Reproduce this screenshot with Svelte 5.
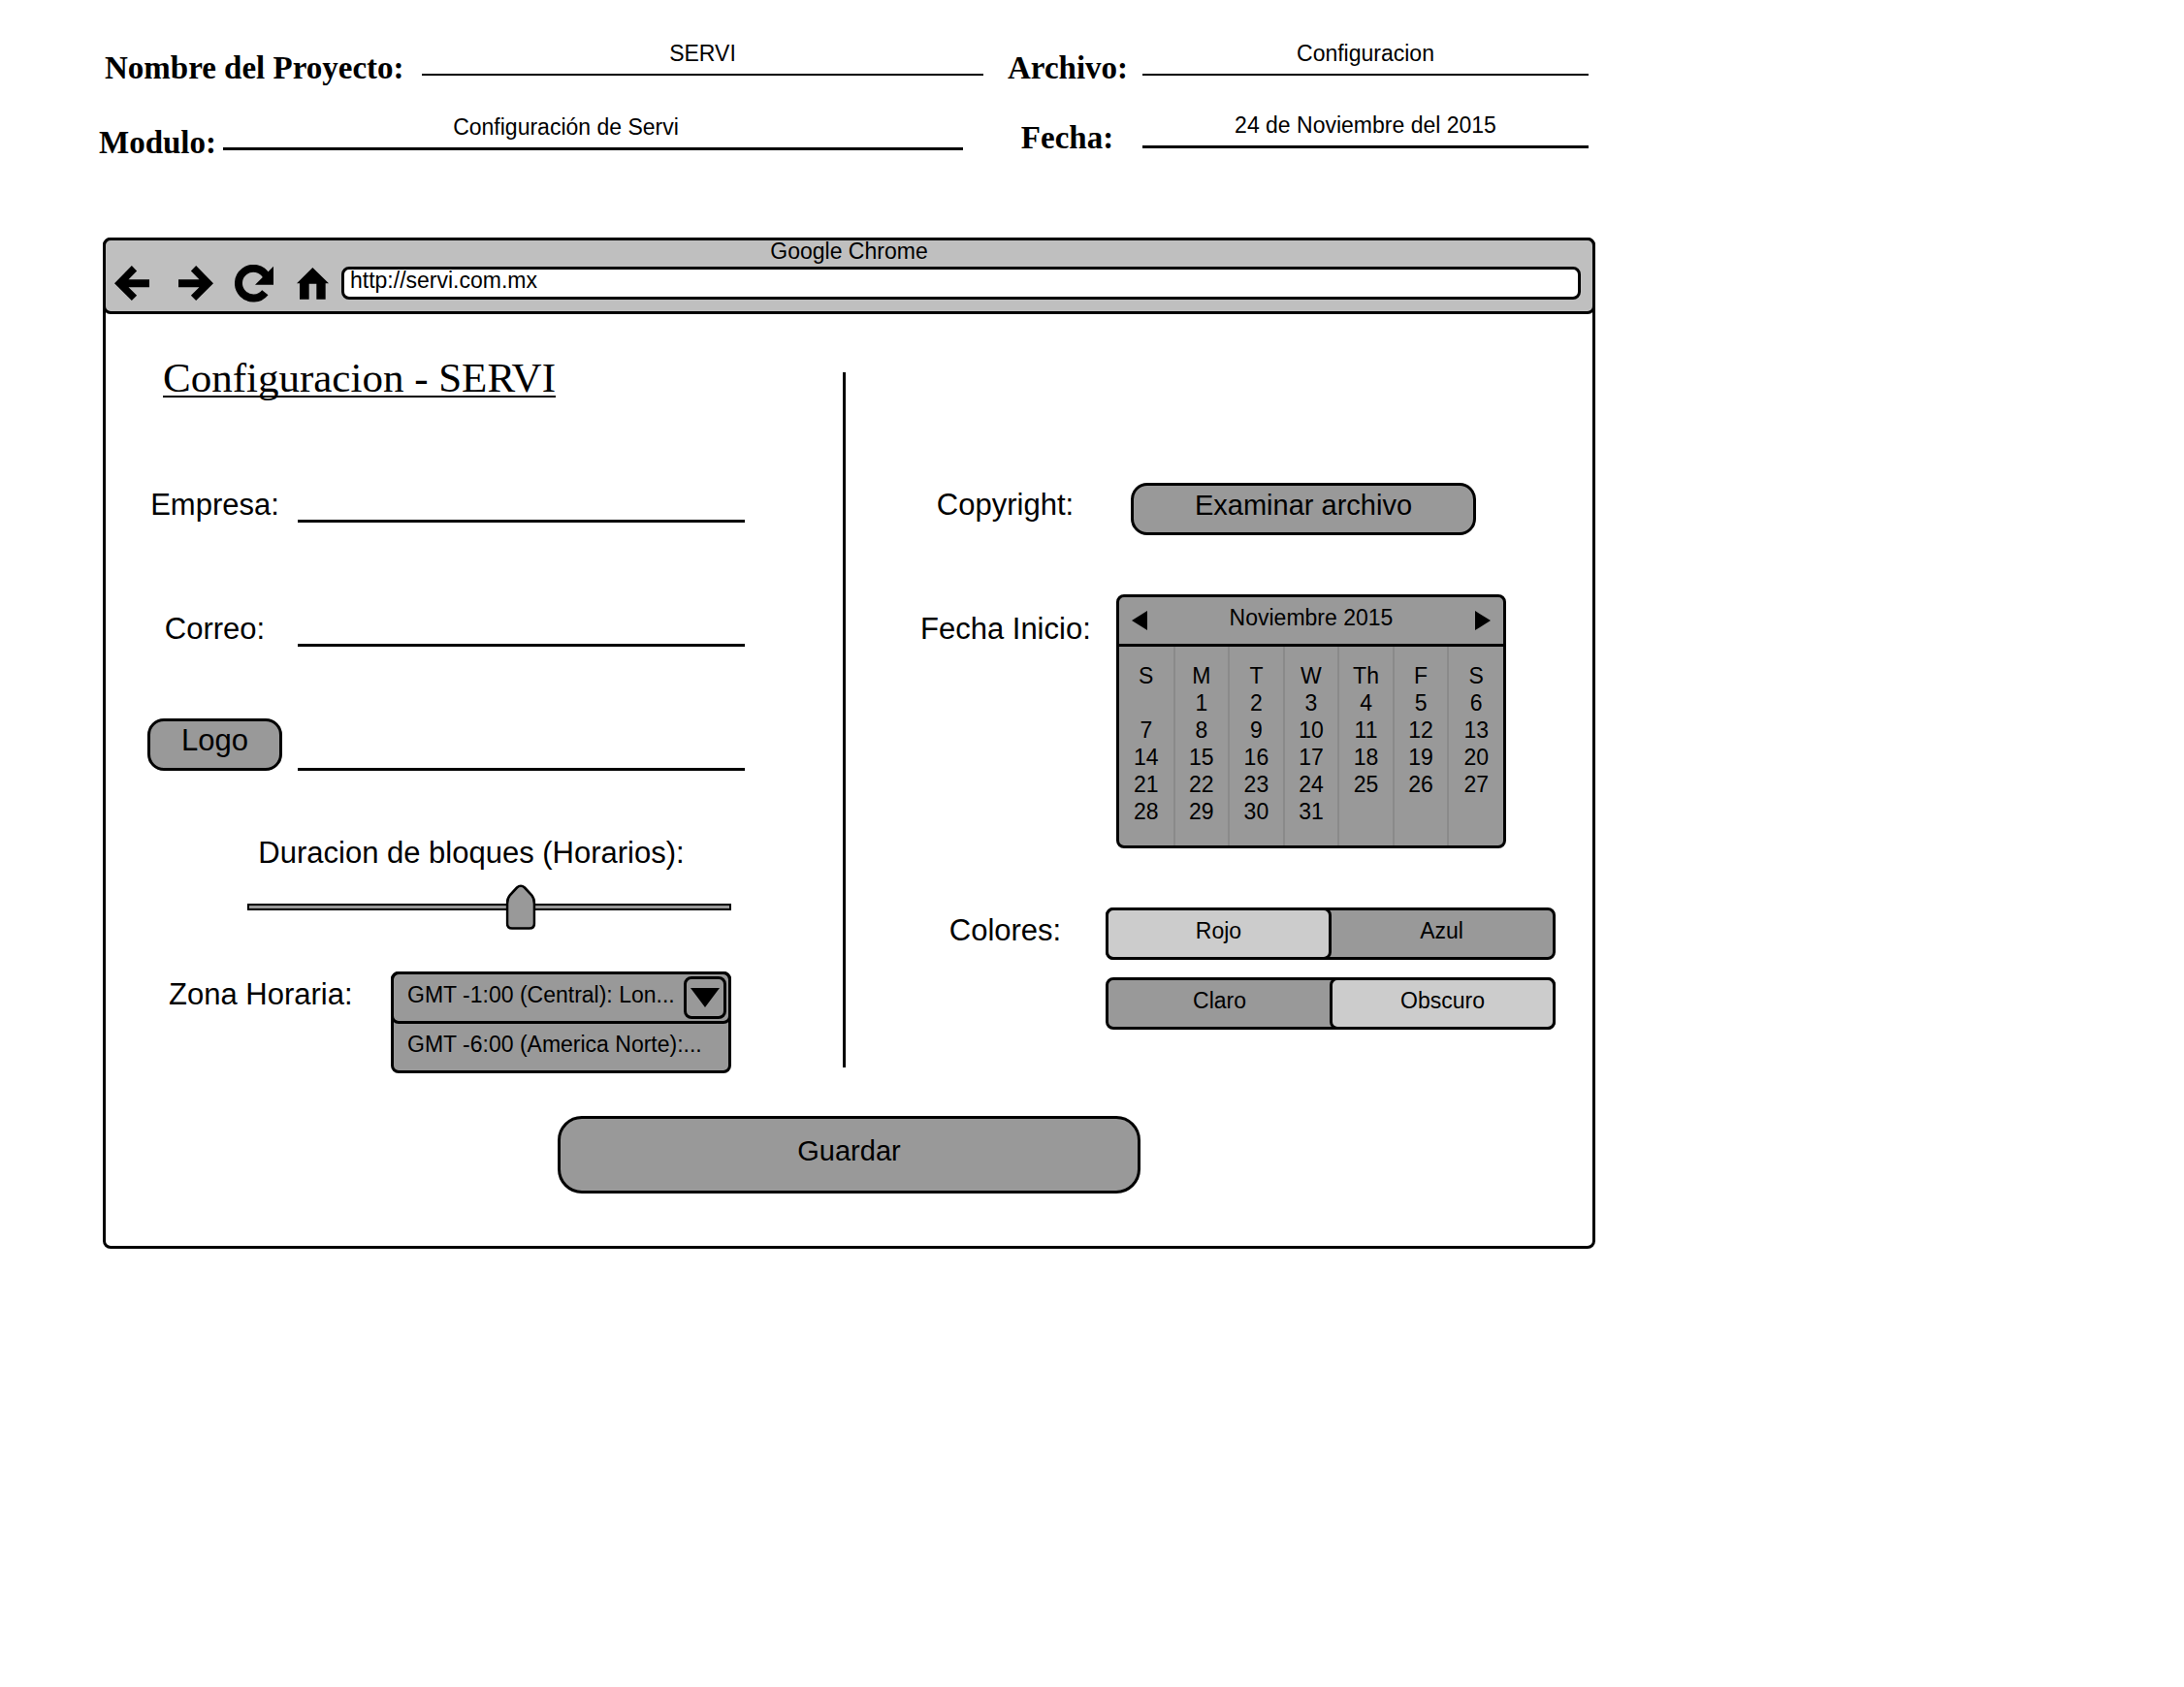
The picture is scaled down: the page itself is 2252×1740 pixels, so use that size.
<script>
  let project = $state('SERVI');
  let moduleName = $state('Configuración de Servi');
  let file = $state('Configuracion');
  let date = $state('24 de Noviembre del 2015');
  let url = $state('http://servi.com.mx');
  let company = $state('');
  let email = $state('');
  let logo = $state('');
  let duration = $state(565);
  let color = $state('Rojo');
  let tone = $state('Obscuro');

  const days = ['S', 'M', 'T', 'W', 'Th', 'F', 'S'];
  const weeks = [
    ['', 1, 2, 3, 4, 5, 6],
    [7, 8, 9, 10, 11, 12, 13],
    [14, 15, 16, 17, 18, 19, 20],
    [21, 22, 23, 24, 25, 26, 27],
    [28, 29, 30, 31, '', '', '']
  ];
</script>

<div class="page">
  <header class="sheet-head">
    <div class="head-col">
      <div class="head-row indent">
        <label class="head-label project" for="project">Nombre del Proyecto:</label>
        <input id="project" class="head-input" bind:value={project} />
      </div>
      <div class="head-row short">
        <label class="head-label module" for="module">Modulo:</label>
        <input id="module" class="head-input thick offset" bind:value={moduleName} />
      </div>
    </div>
    <div class="head-col side">
      <div class="head-row">
        <label class="head-label centered" for="file">Archivo:</label>
        <input id="file" class="head-input" bind:value={file} />
      </div>
      <div class="head-row">
        <label class="head-label centered" for="date">Fecha:</label>
        <input id="date" class="head-input thick low" bind:value={date} />
      </div>
    </div>
  </header>

  <main class="window">
    <div class="chrome">
      <div class="chrome-title">Google Chrome</div>
      <div class="toolbar">
        <nav class="nav">
          <button class="nav-btn back" aria-label="Atrás">
            <svg width="36" height="36" viewBox="0 0 109 109"><path d="M0 55 54 0 70 17 44 43H109V67H44L70 93 54 109Z" /></svg>
          </button>
          <button class="nav-btn" aria-label="Adelante">
            <svg width="36" height="36" viewBox="0 0 109 109"><path d="M109 55 55 0 39 17 65 43H0V67H65L39 93 55 109Z" /></svg>
          </button>
          <button class="nav-btn" aria-label="Recargar">
            <svg width="40" height="39" viewBox="0 0 120 117">
              <path d="M94 86A46 46 0 1 1 98 35" fill="none" stroke="#000" stroke-width="24" />
              <path d="M120 5V62H63Z" />
            </svg>
          </button>
          <button class="nav-btn" aria-label="Inicio">
            <svg width="33" height="33" viewBox="0 0 99 99"><path d="M49 0 99 49H89V98H61V50H38V98H9V49H0Z" /></svg>
          </button>
        </nav>
        <input class="url" aria-label="Dirección" bind:value={url} />
      </div>
    </div>

    <form class="content" onsubmit={(e) => e.preventDefault()}>
      <div class="columns">
        <section class="left">
          <h1>Configuracion - SERVI</h1>
          <div class="fields">
            <label class="label" for="company">Empresa:</label>
            <input id="company" class="line" bind:value={company} />
            <label class="label" for="email">Correo:</label>
            <input id="email" class="line" bind:value={email} />
            <button type="button" class="btn logo">Logo</button>
            <input class="line" aria-label="Logo" bind:value={logo} />
          </div>
          <div class="duration">
            <label class="label" for="duration">Duracion de bloques (Horarios):</label>
            <div class="slider">
              <input id="duration" type="range" min="0" max="1000" bind:value={duration} />
              <svg class="thumb" style:left="{duration / 10}%" width="31" height="47" viewBox="0 0 31 47">
                <path d="M1.5 20Q1.5 14.5 4.5 11L11.5 3.5Q15.5 0 19.5 3.5L26.5 11Q29.5 14.5 29.5 20V40.5Q29.5 45.5 24.5 45.5H6.5Q1.5 45.5 1.5 40.5Z" fill="#999" stroke="#000" stroke-width="2.6" />
              </svg>
            </div>
          </div>
          <div class="zone">
            <label class="label" for="zone">Zona Horaria:</label>
            <div class="combo">
              <div class="combo-head">
                <select id="zone">
                  <option>GMT -1:00 (Central): Lon...</option>
                  <option>GMT -6:00 (America Norte):...</option>
                </select>
                <span class="combo-arrow">
                  <svg width="30" height="20" viewBox="0 0 30 20"><path d="M0 0H30L15 20Z" /></svg>
                </span>
              </div>
              <button type="button" class="combo-option">GMT -6:00 (America Norte):...</button>
            </div>
          </div>
        </section>

        <div class="divider"></div>

        <section class="right">
          <label class="label copy-label" for="copyright">Copyright:</label>
          <button type="button" id="copyright" class="btn browse">Examinar archivo</button>

          <span class="label date-label" id="start-label">Fecha Inicio:</span>
          <div class="calendar" role="group" aria-labelledby="start-label">
            <div class="cal-head">
              <button type="button" class="cal-btn" aria-label="Mes anterior">
                <svg width="16" height="20" viewBox="0 0 16 20"><path d="M16 0V20L0 10Z" /></svg>
              </button>
              <span class="cal-title">Noviembre 2015</span>
              <button type="button" class="cal-btn" aria-label="Mes siguiente">
                <svg width="16" height="20" viewBox="0 0 16 20"><path d="M0 0V20L16 10Z" /></svg>
              </button>
            </div>
            <table>
              <thead>
                <tr>{#each days as day}<th scope="col">{day}</th>{/each}</tr>
              </thead>
              <tbody>
                {#each weeks as week}
                  <tr>{#each week as day}<td>{day}</td>{/each}</tr>
                {/each}
              </tbody>
            </table>
          </div>

          <span class="label color-label" id="color-label">Colores:</span>
          <div class="segments">
            <div class="segment" role="radiogroup" aria-labelledby="color-label">
              {#each ['Rojo', 'Azul'] as option}
                <label class="seg" class:on={color === option}>
                  <input type="radio" name="color" value={option} bind:group={color} />{option}
                </label>
              {/each}
            </div>
            <div class="segment" role="radiogroup" aria-label="Tono">
              {#each ['Claro', 'Obscuro'] as option}
                <label class="seg" class:on={tone === option}>
                  <input type="radio" name="tone" value={option} bind:group={tone} />{option}
                </label>
              {/each}
            </div>
          </div>
        </section>
      </div>
      <button class="btn save">Guardar</button>
    </form>
  </main>
</div>

<style>
  :global(body) {
    margin: 0;
    background: #fff;
  }
  .page,
  .page :global(*) {
    box-sizing: border-box;
  }
  .page {
    max-width: 1645px;
    padding: 38px 0 38px 102px;
    font-family: 'Liberation Sans', Arial, sans-serif;
    font-size: 23px;
    color: #000;
  }
  input,
  button,
  select {
    margin: 0;
    padding: 0;
    border: 0;
    border-radius: 0;
    background: none;
    font: inherit;
    color: inherit;
    outline: none;
  }
  svg {
    display: block;
  }

  .sheet-head {
    display: flex;
    gap: 25px;
    padding-right: 7px;
    margin-bottom: 80px;
  }
  .head-col {
    flex: 912;
    min-width: 0;
    display: flex;
    flex-direction: column;
    gap: 27px;
  }
  .head-col.side {
    flex: 599;
    gap: 25px;
  }
  .head-row {
    display: flex;
    align-items: flex-end;
  }
  .indent {
    padding-left: 6px;
  }
  .short {
    padding-right: 21px;
  }
  .head-label {
    flex: none;
    font: bold 33px/36px 'Liberation Serif', 'Times New Roman', serif;
  }
  .project {
    width: 327px;
  }
  .module {
    width: 128px;
  }
  .centered {
    width: 139px;
    padding-right: 16px;
    text-align: center;
  }
  .head-input {
    flex: 1;
    min-width: 0;
    height: 40px;
    margin-bottom: 10px;
    padding-bottom: 4px;
    border-bottom: 2px solid #000;
    text-align: center;
  }
  .thick {
    border-bottom-width: 3px;
  }
  .offset {
    padding-right: 56px;
  }
  .low {
    margin-bottom: 7px;
  }

  .window {
    margin-left: 4px;
    border: 3px solid #000;
    border-radius: 8px;
  }
  .chrome {
    margin: -3px -3px 0;
    border: 3px solid #000;
    border-radius: 8px;
    background: #bfbfbf;
  }
  .chrome-title {
    line-height: 22px;
    text-align: center;
  }
  .toolbar {
    display: flex;
    align-items: center;
    gap: 4px;
    padding: 2px 12px 9px 1px;
  }
  .nav {
    display: flex;
    gap: 8px;
  }
  .nav-btn {
    display: grid;
    place-items: center;
    width: 52px;
    height: 40px;
  }
  .back {
    margin-right: 6px;
  }
  .url {
    flex: 1;
    min-width: 0;
    height: 34px;
    padding: 0 8px 5px 6px;
    border: 3px solid #000;
    border-radius: 8px;
    background: #fff;
  }

  .content {
    display: flex;
    flex-direction: column;
    align-items: center;
    padding: 42px 0 54px;
  }
  .columns {
    display: grid;
    grid-template-columns: minmax(0, 760fr) 3px minmax(0, 770fr);
    align-self: stretch;
    margin-bottom: 44px;
  }
  .left {
    padding: 0 101px 0 43px;
  }
  .divider {
    margin: 18px 0 6px;
    background: #000;
  }
  .right {
    display: grid;
    grid-template-columns: 175px 1fr;
    column-gap: 16px;
    row-gap: 61px;
    align-content: start;
    padding: 132px 38px 0 77px;
  }
  h1 {
    margin: 0 0 71px 16px;
    font: 43px/48px 'Liberation Serif', 'Times New Roman', serif;
    text-decoration: underline;
    text-decoration-thickness: 2px;
    text-decoration-skip-ink: none;
    text-underline-offset: 4px;
  }
  .label {
    font-size: 31px;
    line-height: 38px;
    text-align: center;
    white-space: nowrap;
  }
  .fields {
    display: grid;
    grid-template-columns: 139px 1fr;
    grid-auto-rows: 54px;
    column-gap: 16px;
    row-gap: 74px;
    align-items: end;
  }
  .fields .label {
    line-height: 36px;
  }
  .line {
    width: 100%;
    height: 54px;
    border-bottom: 3px solid #000;
    font-size: 31px;
  }
  .btn {
    height: 54px;
    padding-bottom: 8px;
    border: 3px solid #000;
    border-radius: 17px;
    background: #999;
    font-size: 29px;
    text-align: center;
  }
  .logo {
    font-size: 31px;
  }
  .duration {
    display: flex;
    flex-direction: column;
    gap: 13px;
    margin: 66px 14px 43px 103px;
  }
  .duration .label {
    padding-right: 37px;
  }
  .slider {
    position: relative;
    display: flex;
    align-items: center;
    height: 47px;
  }
  .slider input {
    width: 100%;
    height: 7px;
    appearance: none;
    border: 2px solid #000;
    background: #999;
  }
  .slider input::-webkit-slider-thumb {
    appearance: none;
    width: 31px;
    height: 47px;
    background: transparent;
  }
  .thumb {
    position: absolute;
    top: 0;
    transform: translateX(-50%);
    pointer-events: none;
  }
  .zone {
    display: flex;
    gap: 40px;
    padding: 0 14px 0 22px;
  }
  .zone .label {
    width: 189px;
    padding-top: 5px;
  }
  .combo {
    flex: 1;
    min-width: 0;
    border: 3px solid #000;
    border-radius: 8px;
    background: #999;
  }
  .combo-head {
    display: flex;
    align-items: center;
    height: 54px;
    margin: -3px -3px 0;
    padding-right: 2px;
    border: 3px solid #000;
    border-radius: 8px;
  }
  .combo select {
    flex: 1;
    min-width: 0;
    height: 48px;
    padding: 0 0 6px 14px;
    appearance: none;
  }
  .combo-arrow {
    display: grid;
    place-items: center;
    width: 44px;
    height: 44px;
    border: 3px solid #000;
    border-radius: 8px;
  }
  .combo-option {
    width: 100%;
    height: 48px;
    padding: 0 0 5px 14px;
    text-align: left;
    white-space: nowrap;
  }

  .copy-label {
    padding-top: 4px;
  }
  .date-label {
    padding-top: 17px;
  }
  .color-label {
    padding-top: 5px;
  }
  .browse {
    width: 356px;
    margin-left: 26px;
  }
  .calendar {
    width: 402px;
    margin-left: 11px;
    border: 3px solid #000;
    border-radius: 8px;
    background: #999;
  }
  .cal-head {
    display: flex;
    align-items: center;
    justify-content: space-between;
    height: 51px;
    padding: 0 13px;
    border-bottom: 3px solid #000;
  }
  .cal-title {
    padding-bottom: 5px;
  }
  table {
    width: 100%;
    border-collapse: collapse;
    table-layout: fixed;
  }
  th,
  td {
    height: 28px;
    padding: 0;
    font-weight: normal;
    line-height: 28px;
    text-align: center;
  }
  th + th,
  td + td {
    border-left: 2px solid #8a8a8a;
  }
  th {
    padding-top: 16px;
  }
  tbody tr:last-child td {
    padding-bottom: 21px;
  }
  .segments {
    display: flex;
    flex-direction: column;
    gap: 18px;
  }
  .segment {
    display: grid;
    grid-template-columns: 1fr 1fr;
    height: 54px;
    border: 3px solid #000;
    border-radius: 8px;
    background: #999;
  }
  .seg {
    display: grid;
    place-items: center;
    padding-bottom: 5px;
  }
  .seg.on {
    margin: -3px;
    border: 3px solid #000;
    border-radius: 8px;
    background: #ccc;
  }
  .seg:first-child.on {
    margin-right: -1px;
  }
  .seg:last-child.on {
    margin-left: -1px;
  }
  .seg input {
    position: absolute;
    opacity: 0;
    pointer-events: none;
  }
  .save {
    width: 601px;
    max-width: 90%;
    height: 80px;
    border-radius: 25px;
  }
</style>
